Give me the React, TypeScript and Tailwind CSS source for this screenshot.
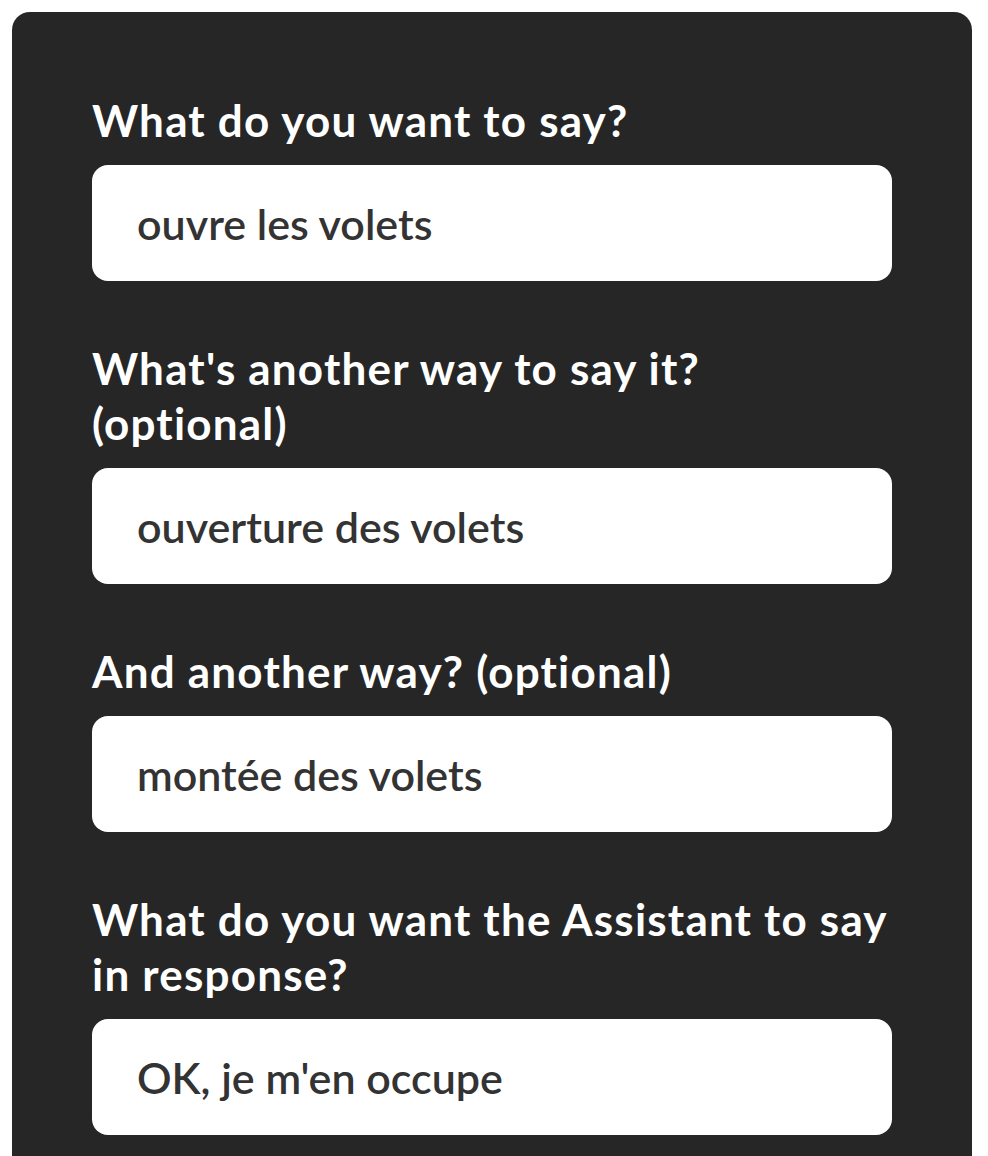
import React from 'react';

const fields = [
  { label: 'What do you want to say?', value: 'ouvre les volets' },
  { label: "What's another way to say it? (optional)", value: 'ouverture des volets' },
  { label: 'And another way? (optional)', value: 'montée des volets' },
  { label: 'What do you want the Assistant to say in response?', value: "OK, je m'en occupe" },
];

const App = () => {
  return (
    <div className="min-h-screen bg-white pt-3 pl-3" style={{ fontFamily: 'Lato, "Noto Sans", sans-serif' }}>
      <div className="w-[960px] min-h-[1200px] rounded-t-[18px] bg-[#262626] px-20 pt-[81px]">
        <div className="flex flex-col gap-[60px]">
          {fields.map((f) => (
            <div key={f.label} className="flex flex-col gap-[17px]">
              <label className="text-[44px] leading-[55px] font-bold tracking-[1.2px] text-white">{f.label}</label>
              <div className="h-[116px] rounded-2xl bg-white px-[45px] flex items-center">
                <span className="text-[43px] leading-[55px] font-semibold text-[#333333]">{f.value}</span>
              </div>
            </div>
          ))}
        </div>
      </div>
    </div>
  );
};

export default App;
